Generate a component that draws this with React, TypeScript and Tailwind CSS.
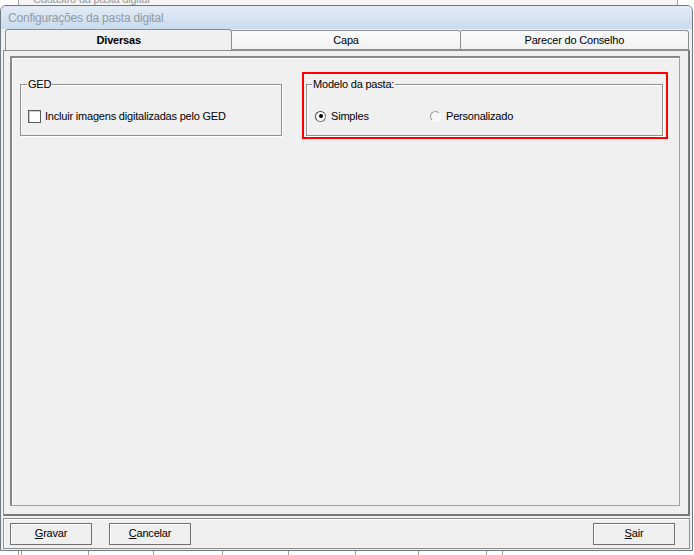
import React from 'react';

const Btn = ({ ul, rest }: { ul: string; rest: string }) => (
    <button className="w-[82px] h-[22px] border border-[#707070] bg-[#efefef] shadow-[inset_1px_1px_0_#ffffff] text-[11px] tracking-[-0.2px] text-black flex items-center justify-center">
        <span className="underline">{ul}</span>{rest}
    </button>
);

const App = () => {
    return (
        <div className="w-[694px] h-[555px] bg-white overflow-hidden relative tracking-[-0.2px]" style={{ fontFamily: '"Liberation Sans", Arial, sans-serif' }}>
            {/* underlying window peeking at top */}
            <div className="absolute top-[-8px] left-[18px] w-[660px] h-[16px] border border-[#a0a0a0] bg-[#f4f4f4] text-[11px] text-[#9a9a9a] pl-[14px] leading-[12px]">
                Cadastro da pasta digital
            </div>

            <div className="absolute top-[5px] left-0 w-[693px] h-[546px] flex flex-col rounded-t-[6px] border border-[#6f7780] bg-[#f0f0f0]">
                {/* title bar */}
                <div className="h-[23px] shrink-0 rounded-t-[5px] bg-gradient-to-b from-[#e3ecf6] to-[#c9dbed] flex items-center pl-[7px] text-[12px] text-[#8f9aa6]">
                    Configurações da pasta digital
                </div>

                <div className="flex-1 flex flex-col px-[2px] pb-[1px]">
                    {/* tabs */}
                    <div className="flex h-[21px] pl-[2px] pr-[1px] shrink-0">
                        <div className="w-[228px] h-[21px] bg-[#f0f0f0] border border-b-0 border-[#8d8d8d] rounded-t-[3px] flex items-center justify-center text-[11px] font-bold text-black relative z-10 -mb-[1px]">
                            Diversas
                        </div>
                        <div className="w-[229px] h-[20px] mt-[1px] bg-gradient-to-b from-[#fafafa] to-[#f2f2f2] border border-[#8d8d8d] border-l-0 rounded-tr-[3px] flex items-center justify-center text-[11px] text-black">
                            Capa
                        </div>
                        <div className="w-[229px] h-[20px] mt-[1px] bg-gradient-to-b from-[#fafafa] to-[#f2f2f2] border border-[#8d8d8d] border-l-0 rounded-tr-[3px] flex items-center justify-center text-[11px] text-black">
                            Parecer do Conselho
                        </div>
                    </div>

                    {/* tab panel */}
                    <div className="h-[466px] shrink-0 border border-[#8d8d8d] border-r-[2px] border-b-[2px] border-r-[#7a7a7a] border-b-[#7a7a7a] bg-[#f0f0f0] pl-[6px] pr-[8px] pt-[5px] pb-[8px] flex flex-col">
                        <div className="flex-1 border border-[#a0a0a0] border-t-[2px] border-l-[2px] border-t-[#888] border-l-[#888] shadow-[inset_1px_1px_0_#ffffff] px-[8px] pt-[26px] flex gap-[20px]">
                            {/* GED group */}
                            <div className="relative w-[262px] h-[52px] border border-[#8f8f8f] shadow-[inset_1px_1px_0_#ffffff,1px_1px_0_#ffffff]">
                                <span className="absolute -top-[8px] left-[6px] px-[1px] bg-[#f0f0f0] text-[11px] leading-[14px] text-black">GED</span>
                                <div className="flex items-center gap-[4px] pl-[7px] pt-[23px]">
                                    <div className="w-[13px] h-[13px] border border-[#5a5a5a] bg-white shadow-[inset_1px_1px_0_#cfcfcf]" />
                                    <span className="text-[11px] text-black">Incluir imagens digitalizadas pelo GED</span>
                                </div>
                            </div>

                            {/* Modelo group, highlighted */}
                            <div className="-mt-[12px] w-[366px] h-[67px] border-[2px] border-[#ff0000] pl-[2px] pr-[3px] pt-[10px]">
                                <div className="relative h-[52px] border border-[#8f8f8f] shadow-[inset_1px_1px_0_#ffffff,1px_1px_0_#ffffff]">
                                    <span className="absolute -top-[8px] left-[5px] px-[1px] bg-[#f0f0f0] text-[11px] leading-[14px] text-black">Modelo da pasta:</span>
                                    <div className="flex items-center pl-[8px] pt-[23px]">
                                        <div className="flex items-center gap-[5px] w-[115px]">
                                            <div className="w-[11px] h-[11px] rounded-full border border-[#7a7a7a] border-l-[#4a4a4a] border-t-[#4a4a4a] bg-white flex items-center justify-center">
                                                <div className="w-[4px] h-[4px] rounded-full bg-black" />
                                            </div>
                                            <span className="text-[11px] text-black">Simples</span>
                                        </div>
                                        <div className="flex items-center gap-[5px]">
                                            <div className="w-[11px] h-[11px] rounded-full border border-[#9a9a9a] border-r-white border-b-white bg-[#f6f6f6]" />
                                            <span className="text-[11px] text-black">Personalizado</span>
                                        </div>
                                    </div>
                                </div>
                            </div>
                        </div>
                    </div>

                    {/* buttons bar */}
                    <div className="mt-[2px] flex-1 border border-[#8d8d8d] shadow-[inset_1px_1px_0_#ffffff] flex items-center pl-[6px] gap-[17px]">
                        <Btn ul="G" rest="ravar" />
                        <Btn ul="C" rest="ancelar" />
                        <div className="flex-1" />
                        <div className="mr-[14px]">
                            <Btn ul="S" rest="air" />
                        </div>
                    </div>
                </div>
            </div>

            {/* underlying grid marks at the bottom */}
            <div className="absolute left-0 top-[551px] w-[694px] h-[4px] flex">
                {[18, 21, 88, 153, 222, 288, 355, 418, 486, 502].map((x) => (
                    <div key={x} className="absolute top-0 w-[1px] h-[4px] bg-[#9a9a9a]" style={{ left: x }} />
                ))}
            </div>
        </div>
    );
};

export default App;
